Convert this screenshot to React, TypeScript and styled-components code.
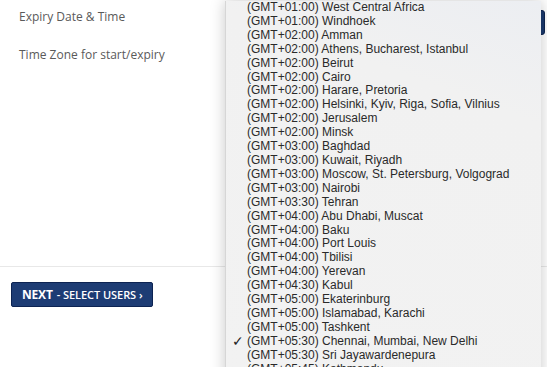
import React from "react";
import styled, { createGlobalStyle } from "styled-components";

const Global = createGlobalStyle`
  html, body { margin: 0; padding: 0; background: #fff; overflow: hidden; }
  body { width: 547px; height: 367px; }
`;

const Page = styled.div`
  position: relative;
  width: 547px;
  height: 367px;
  overflow: hidden;
  font-family: "Open Sans", "Liberation Sans", sans-serif;
`;

const Form = styled.div`
  display: flex;
  flex-direction: column;
  padding-top: 9px;
  gap: 22px;
  height: 267px;
  box-sizing: border-box;
  border-bottom: 1px solid #e8e8e8;
`;

const Row = styled.div`
  display: flex;
  justify-content: space-between;
  align-items: flex-start;
  padding-left: 19px;
  padding-right: 2px;
  height: 16px;
`;

const Label = styled.span`
  font-size: 12px;
  line-height: 16px;
  color: #5a5a5a;
`;

const PickerButton = styled.div`
  width: 60px;
  height: 25px;
  margin-top: 1px;
  background: #1b3a6e;
  border: 1px solid #0f2550;
  border-radius: 3px;
  box-sizing: border-box;
`;

const Footer = styled.div`
  padding: 15px 0 0 11px;
`;

const NextButton = styled.button`
  display: flex;
  align-items: center;
  gap: 4px;
  width: 142px;
  height: 25px;
  padding: 0 0 0 10px;
  background: #1d3c74;
  border: 1px solid #0c2352;
  border-radius: 2px;
  color: #fff;
  font-family: "Open Sans", "Liberation Sans", sans-serif;
  font-size: 12px;
  font-weight: 700;
  letter-spacing: -0.2px;
  box-sizing: border-box;
  white-space: nowrap;
`;

const Minor = styled.span`
  font-size: 11px;
  font-weight: 600;
  letter-spacing: -0.05px;
`;

const Menu = styled.ul`
  position: absolute;
  left: 225px;
  top: 1px;
  width: 315px;
  height: 380px;
  margin: 0;
  padding: 0;
  list-style: none;
  background: linear-gradient(200deg, #eceef2 0%, #f1f1f1 25%, #f2f2f2 100%);
  border-left: 1px solid #d6d6d6;
  box-shadow: 0 0 14px rgba(0, 0, 0, 0.22);
  font-family: "Liberation Sans", Arial, sans-serif;
`;

const Item = styled.li`
  position: relative;
  height: 13.92px;
  line-height: 13.92px;
  padding-left: 21px;
  font-size: 12px;
  color: #2a2a2a;
  white-space: nowrap;
`;

const Check = styled.span`
  position: absolute;
  left: 6px;
  top: 0;
  font-size: 14px;
  color: #222;
`;

const zones = [
  "(GMT+01:00) West Central Africa",
  "(GMT+01:00) Windhoek",
  "(GMT+02:00) Amman",
  "(GMT+02:00) Athens, Bucharest, Istanbul",
  "(GMT+02:00) Beirut",
  "(GMT+02:00) Cairo",
  "(GMT+02:00) Harare, Pretoria",
  "(GMT+02:00) Helsinki, Kyiv, Riga, Sofia, Vilnius",
  "(GMT+02:00) Jerusalem",
  "(GMT+02:00) Minsk",
  "(GMT+03:00) Baghdad",
  "(GMT+03:00) Kuwait, Riyadh",
  "(GMT+03:00) Moscow, St. Petersburg, Volgograd",
  "(GMT+03:00) Nairobi",
  "(GMT+03:30) Tehran",
  "(GMT+04:00) Abu Dhabi, Muscat",
  "(GMT+04:00) Baku",
  "(GMT+04:00) Port Louis",
  "(GMT+04:00) Tbilisi",
  "(GMT+04:00) Yerevan",
  "(GMT+04:30) Kabul",
  "(GMT+05:00) Ekaterinburg",
  "(GMT+05:00) Islamabad, Karachi",
  "(GMT+05:00) Tashkent",
  "(GMT+05:30) Chennai, Mumbai, New Delhi",
  "(GMT+05:30) Sri Jayawardenepura",
  "(GMT+05:45) Kathmandu",
];

const selected = "(GMT+05:30) Chennai, Mumbai, New Delhi";

export default function App() {
  return (
    <Page>
      <Global />
      <Form>
        <Row>
          <Label>Expiry Date &amp; Time</Label>
          <PickerButton />
        </Row>
        <Row>
          <Label>Time Zone for start/expiry</Label>
        </Row>
      </Form>
      <Footer>
        <NextButton>
          NEXT <Minor>- SELECT USERS ›</Minor>
        </NextButton>
      </Footer>
      <Menu>
        {zones.map((z) => (
          <Item key={z}>
            {z === selected && <Check>✓</Check>}
            {z}
          </Item>
        ))}
      </Menu>
    </Page>
  );
}
